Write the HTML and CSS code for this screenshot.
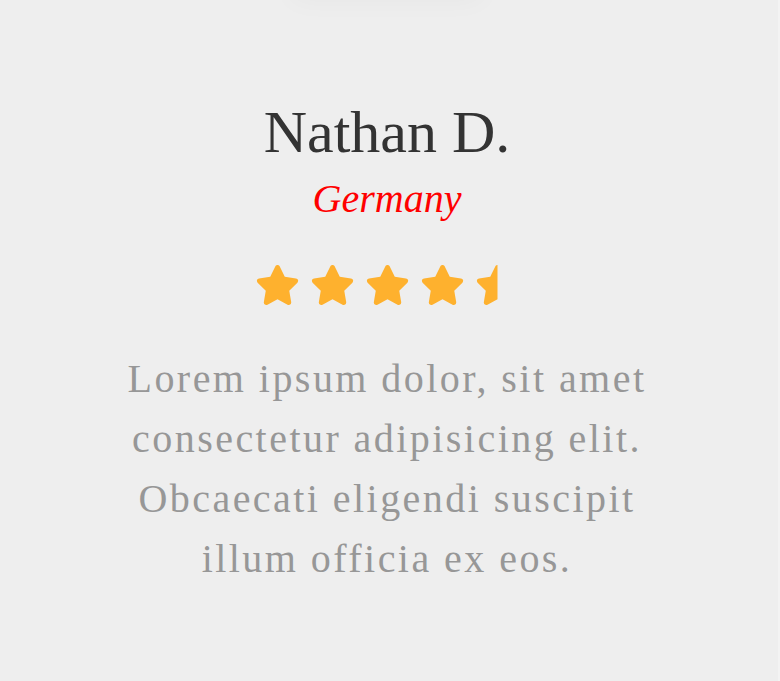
FILE: index.html
```html
<!DOCTYPE html>
<html lang="en">
<head>
<meta charset="utf-8">
<title>Testimonial</title>
<link rel="stylesheet" href="styles.css">
</head>
<body>
<div class="card">
  <div class="avatar"></div>
  <h2 class="name">Nathan D.</h2>
  <p class="country">Germany</p>
  <div class="stars">
    <svg class="star" viewBox="0 0 576 512"><path d="M316.9 18C311.6 7 300.4 0 288.1 0s-23.4 7-28.8 18L195 150.3 51.4 171.5c-12 1.8-22 10.2-25.7 21.7s-.7 24.2 7.9 32.7L137.8 329 113.2 474.7c-2 12 3 24.2 12.9 31.3s23 8 33.8 2.3l128.3-68.5 128.3 68.5c10.8 5.7 23.9 4.9 33.8-2.3s14.9-19.3 12.9-31.3L438.5 329 542.7 225.9c8.6-8.5 11.7-21.2 7.9-32.7s-13.7-19.9-25.7-21.7L381.2 150.3 316.9 18z"/></svg>
    <svg class="star" viewBox="0 0 576 512"><path d="M316.9 18C311.6 7 300.4 0 288.1 0s-23.4 7-28.8 18L195 150.3 51.4 171.5c-12 1.8-22 10.2-25.7 21.7s-.7 24.2 7.9 32.7L137.8 329 113.2 474.7c-2 12 3 24.2 12.9 31.3s23 8 33.8 2.3l128.3-68.5 128.3 68.5c10.8 5.7 23.9 4.9 33.8-2.3s14.9-19.3 12.9-31.3L438.5 329 542.7 225.9c8.6-8.5 11.7-21.2 7.9-32.7s-13.7-19.9-25.7-21.7L381.2 150.3 316.9 18z"/></svg>
    <svg class="star" viewBox="0 0 576 512"><path d="M316.9 18C311.6 7 300.4 0 288.1 0s-23.4 7-28.8 18L195 150.3 51.4 171.5c-12 1.8-22 10.2-25.7 21.7s-.7 24.2 7.9 32.7L137.8 329 113.2 474.7c-2 12 3 24.2 12.9 31.3s23 8 33.8 2.3l128.3-68.5 128.3 68.5c10.8 5.7 23.9 4.9 33.8-2.3s14.9-19.3 12.9-31.3L438.5 329 542.7 225.9c8.6-8.5 11.7-21.2 7.9-32.7s-13.7-19.9-25.7-21.7L381.2 150.3 316.9 18z"/></svg>
    <svg class="star" viewBox="0 0 576 512"><path d="M316.9 18C311.6 7 300.4 0 288.1 0s-23.4 7-28.8 18L195 150.3 51.4 171.5c-12 1.8-22 10.2-25.7 21.7s-.7 24.2 7.9 32.7L137.8 329 113.2 474.7c-2 12 3 24.2 12.9 31.3s23 8 33.8 2.3l128.3-68.5 128.3 68.5c10.8 5.7 23.9 4.9 33.8-2.3s14.9-19.3 12.9-31.3L438.5 329 542.7 225.9c8.6-8.5 11.7-21.2 7.9-32.7s-13.7-19.9-25.7-21.7L381.2 150.3 316.9 18z"/></svg>
    <svg class="star" viewBox="0 0 576 512"><defs><clipPath id="half"><rect x="0" y="0" width="288" height="512"/></clipPath></defs><path clip-path="url(#half)" d="M316.9 18C311.6 7 300.4 0 288.1 0s-23.4 7-28.8 18L195 150.3 51.4 171.5c-12 1.8-22 10.2-25.7 21.7s-.7 24.2 7.9 32.7L137.8 329 113.2 474.7c-2 12 3 24.2 12.9 31.3s23 8 33.8 2.3l128.3-68.5 128.3 68.5c10.8 5.7 23.9 4.9 33.8-2.3s14.9-19.3 12.9-31.3L438.5 329 542.7 225.9c8.6-8.5 11.7-21.2 7.9-32.7s-13.7-19.9-25.7-21.7L381.2 150.3 316.9 18z"/></svg>
  </div>
  <p class="quote">Lorem ipsum dolor, sit amet consectetur adipisicing elit. Obcaecati eligendi suscipit illum officia ex eos.</p>
</div>
</body>
</html>
```
FILE: styles.css
```css
html, body {
  margin: 0;
  padding: 0;
}
body {
  background: #f3f3f3;
  height: 681px;
  overflow: hidden;
}
.card {
  margin-right: 2px;
  padding-right: 4px;
  height: 681px;
  background: #eeeeee;
  display: flex;
  flex-direction: column;
  align-items: center;
  font-family: "Liberation Serif", "Times New Roman", serif;
}
.avatar {
  width: 190px;
  height: 100px;
  margin-top: -100px;
  background: #eeeeee;
  box-shadow: 0 0 26px rgba(0, 0, 0, 0.035);
}
.name {
  margin: 102px 0 0;
  font-size: 60px;
  line-height: 60px;
  font-weight: normal;
  color: #333333;
}
.country {
  margin: 13px 0 0;
  font-size: 40px;
  line-height: 48px;
  font-style: italic;
  color: #ff0000;
}
.stars {
  margin-top: 42px;
  display: flex;
  gap: 10px;
}
.star {
  width: 45px;
  height: 40px;
  fill: #feb12e;
  display: block;
}
.quote {
  margin: 44px 0 0;
  max-width: 560px;
  text-align: center;
  font-size: 40px;
  line-height: 60px;
  letter-spacing: 2.45px;
  color: #979797;
}
```
